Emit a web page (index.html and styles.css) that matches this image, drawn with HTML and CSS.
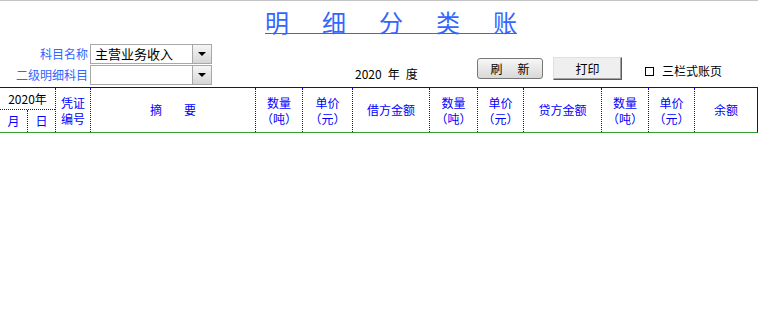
FILE: index.html
```html
<!DOCTYPE html>
<html lang="zh-CN">
<head>
<meta charset="utf-8">
<title>明细分类账</title>
<link rel="stylesheet" href="styles.css">
</head>
<body>
<div class="page">
  <div class="title-row">
    <h1 class="title"><span>明</span><span>细</span><span>分</span><span>类</span><span>账</span></h1>
  </div>
  <div class="controls">
    <div class="fields">
      <span class="lbl">科目名称</span>
      <div class="combo"><span class="combo-text">主营业务收入</span><span class="combo-btn"></span></div>
      <span class="lbl">二级明细科目</span>
      <div class="combo"><span class="combo-text"></span><span class="combo-btn"></span></div>
    </div>
    <div class="year"><span>2020</span><span>年</span><span>度</span></div>
    <button class="btn btn-refresh"><span>刷</span><span>新</span></button>
    <button class="btn btn-print">打印</button>
    <div class="check"><span class="box"></span><span>三栏式账页</span></div>
  </div>
  <div class="ledger">
    <div class="date-col">
      <div class="yr">2020年</div>
      <div class="md"><span class="m">月</span><span class="d">日</span></div>
    </div>
    <div class="c two"><span>凭证</span><span>编号</span></div>
    <div class="c gap"><span>摘</span><span>要</span></div>
    <div class="c two"><span>数量</span><span>（吨）</span></div>
    <div class="c two"><span>单价</span><span>（元）</span></div>
    <div class="c">借方金额</div>
    <div class="c two"><span>数量</span><span>（吨）</span></div>
    <div class="c two"><span>单价</span><span>（元）</span></div>
    <div class="c">贷方金额</div>
    <div class="c two"><span>数量</span><span>（吨）</span></div>
    <div class="c two"><span>单价</span><span>（元）</span></div>
    <div class="c">余额</div>
  </div>
</div>
</body>
</html>
```
FILE: styles.css
```css
* { box-sizing: border-box; }
html, body { margin: 0; padding: 0; background: #fff; }
body {
  font-family: "Noto Sans CJK SC", "Noto Sans", "Liberation Sans", sans-serif;
  font-size: 12px;
  color: #000;
}
.page {
  width: 758px;
  height: 332px;
  border-top: 1px solid #c4c4c4;
  overflow: hidden;
}
.title-row {
  height: 34px;
  padding: 9px 0 0 265px;
}
.title {
  margin: 0;
  display: inline-flex;
  gap: 33px;
  font-size: 24px;
  font-weight: normal;
  line-height: 23px;
  color: #3366ff;
  border-bottom: 1px solid #3366ff;
}
.controls {
  height: 52px;
  display: flex;
  align-items: flex-start;
}
.fields {
  margin-top: 9px;
  display: grid;
  grid-template-columns: 90px 122px;
  grid-auto-rows: 20px;
  row-gap: 1px;
}
.lbl {
  text-align: right;
  padding-right: 2px;
  color: #3366ff;
  line-height: 20px;
  white-space: nowrap;
}
.combo {
  display: flex;
  height: 20px;
  border: 1px solid #a8a8a8;
  background: #fff;
}
.combo-text {
  flex: 1;
  padding-left: 4px;
  font-size: 13px;
  line-height: 18px;
}
.combo-btn {
  width: 19px;
  border-left: 1px solid #a8a8a8;
  background: linear-gradient(#f6f6f6, #d6d6d6);
  display: flex;
  align-items: center;
  justify-content: center;
}
.combo-btn::after {
  content: "";
  border-left: 4px solid transparent;
  border-right: 4px solid transparent;
  border-top: 4px solid #000;
}
.year {
  width: 122px;
  margin-left: 143px;
  margin-top: 32px;
  line-height: 14px;
  display: flex;
  gap: 6px;
}
.btn {
  font-family: inherit;
  font-size: 12px;
  color: #000;
  padding: 0;
  display: flex;
  align-items: center;
  justify-content: center;
}
.btn-refresh {
  width: 66px;
  height: 21px;
  margin-top: 23px;
  gap: 15px;
  border: 1px solid #777;
  border-radius: 3px;
  background: linear-gradient(#f7f7f7, #d8d8d8);
}
.btn-print {
  width: 69px;
  height: 23px;
  margin-top: 22px;
  margin-left: 10px;
  background: #efefef;
  border: 1px solid;
  border-color: #e0e0e0 #5a5a5a #5a5a5a #e0e0e0;
  box-shadow: inset -1px -1px 0 #a0a0a0;
}
.check {
  margin-left: 23px;
  margin-top: 29px;
  display: flex;
  align-items: center;
  gap: 8px;
  line-height: 14px;
}
.box {
  width: 9px;
  height: 9px;
  border: 1px solid #000;
}
.ledger {
  width: 758px;
  height: 46px;
  display: grid;
  grid-template-columns: 55px 35px 165px 47px 50px 77px 48px 46px 78px 47px 46px 63px;
  border-top: 1px solid #0000ff;
  border-right: 1px solid #0000ff;
  border-bottom: 1px solid #33a033;
  color: #0000ff;
  line-height: 16px;
}
.c {
  border-left: 1px dotted #0000ff;
  display: flex;
  align-items: center;
  justify-content: center;
  text-align: center;
}
.two {
  flex-direction: column;
  gap: 1px;
}
.two span { display: block; line-height: 15px; }
.gap { gap: 22px; }
.date-col {
  display: grid;
  grid-template-rows: 22px 22px;
}
.yr {
  color: #000;
  border-bottom: 1px dotted #0000ff;
  display: flex;
  align-items: center;
  justify-content: center;
}
.md {
  display: grid;
  grid-template-columns: 27px 28px;
}
.md span {
  display: flex;
  align-items: center;
  justify-content: center;
}
.md .d { border-left: 1px dotted #0000ff; }
```
